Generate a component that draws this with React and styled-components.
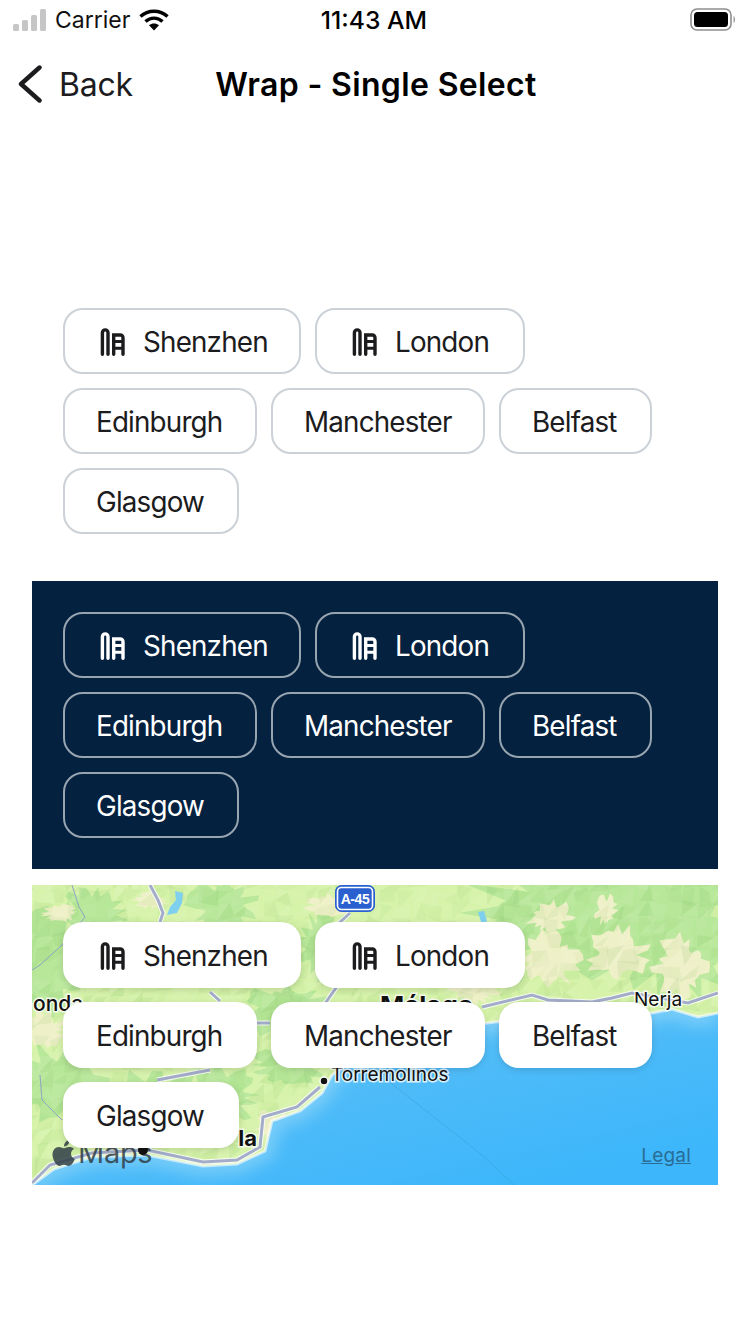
import React from "react";
import styled, { createGlobalStyle } from "styled-components";

const GlobalStyle = createGlobalStyle`
  html, body { margin: 0; padding: 0; background: #fff; }
  body { font-family: Inter, "Liberation Sans", sans-serif; }
`;

const Page = styled.div`
  width: 750px;
  height: 1334px;
  overflow: hidden;
  background: #fff;
  color: #000;
`;

const StatusBar = styled.div`
  height: 40px;
  display: grid;
  grid-template-columns: 1fr auto 1fr;
  align-items: center;
  padding: 0 15px 0 13px;
  box-sizing: border-box;
`;

const StatusLeft = styled.div`
  display: flex;
  align-items: center;
  gap: 9px;
  font-size: 23px;
  color: #111;
`;

const StatusTime = styled.div`
  font-size: 24.7px;
  font-weight: 500;
`;

const StatusRight = styled.div`
  display: flex;
  justify-content: flex-end;
`;

const NavBar = styled.div`
  height: 88px;
  display: grid;
  grid-template-columns: 1fr auto 1fr;
  align-items: center;
  padding: 0 18px;
  box-sizing: border-box;
`;

const BackButton = styled.div`
  display: flex;
  align-items: center;
  gap: 16px;
  font-size: 32px;
  letter-spacing: -0.2px;
  color: #1c1c1e;
`;

const NavTitle = styled.div`
  font-size: 32px;
  font-weight: 600;
  letter-spacing: 0.35px;
  color: #000;
  padding-left: 2px;
`;

const Spacer = styled.div`
  height: 180px;
`;

const Section = styled.div`
  position: relative;
  margin: 0 32px ${(p) => p.$gap || 0}px;
  padding: ${(p) => p.$top ?? 31}px 31px ${(p) => p.$bottom ?? 31}px;
  background: ${(p) => p.$bg || "transparent"};
  height: ${(p) => (p.$height ? p.$height + "px" : "auto")};
  box-sizing: border-box;
  overflow: hidden;
`;

const ChipWrap = styled.div`
  position: relative;
  display: flex;
  flex-wrap: wrap;
  gap: 14px;
`;

const Chip = styled.div`
  width: ${(p) => p.$width}px;
  height: 66px;
  box-sizing: border-box;
  display: flex;
  align-items: center;
  gap: 18px;
  padding: 2px 0 0 ${(p) => (p.$hasIcon ? 35 : 31)}px;
  border-radius: 20px;
  font-size: 27.8px;
  letter-spacing: -0.82px;
  border: 2px solid
    ${(p) => (p.$variant === "dark" ? "#98a5b1" : p.$variant === "light" ? "#cbd1d6" : "transparent")};
  color: ${(p) => (p.$variant === "dark" ? "#fff" : "#1c1c1e")};
  background: ${(p) => (p.$variant === "map" ? "#fff" : "transparent")};
  box-shadow: ${(p) => (p.$variant === "map" ? "0 2px 7px rgba(0, 0, 0, 0.13)" : "none")};
`;

const MapLayer = styled.svg`
  position: absolute;
  left: 0;
  top: 0;
`;

const Legal = styled.span`
  position: absolute;
  right: 27px;
  bottom: 18px;
  font-size: 19px;
  letter-spacing: 0.2px;
  color: #2a6d94;
  text-decoration: underline;
`;

const MapsLogo = styled.div`
  position: absolute;
  left: 20px;
  bottom: 15px;
  display: flex;
  align-items: center;
  gap: 2px;
  font-size: 29px;
  letter-spacing: -0.3px;
  color: rgba(48, 62, 72, 0.85);
`;

const MapDot = styled.span`
  position: absolute;
  left: 106px;
  top: 260px;
  width: 10px;
  height: 10px;
  border-radius: 50%;
  background: #111;
`;

const CITIES = [
  { name: "Shenzhen", width: 238, icon: true },
  { name: "London", width: 210, icon: true },
  { name: "Edinburgh", width: 194 },
  { name: "Manchester", width: 214 },
  { name: "Belfast", width: 153 },
  { name: "Glasgow", width: 176 },
];

function CityIcon({ color }) {
  return (
    <svg width="25" height="28" viewBox="0 0 25 28" fill="none" stroke={color} strokeWidth="3.4" strokeLinecap="round">
      <path d="M2.400 26.200V4.700a2.800 2.800 0 0 1 5.600 0V26.200" />
      <path d="M13.700 26.200V7H20.300a2.700 2.700 0 0 1 2.700 2.700V26.200" />
      <path d="M13.700 13.500H23M13.700 20.300H23" strokeLinecap="butt" strokeWidth="3" />
    </svg>
  );
}

function Chips({ variant }) {
  const iconColor = variant === "dark" ? "#fff" : "#1c1c1e";
  return (
    <ChipWrap>
      {CITIES.map((c) => (
        <Chip key={c.name} $variant={variant} $hasIcon={c.icon} $width={c.width}>
          {c.icon && <CityIcon color={iconColor} />}
          {c.name}
        </Chip>
      ))}
    </ChipWrap>
  );
}

const COAST =
  "M0 300 L22 284 L60 272 L115 270 L171 281 L205 279 L233 266 L240 236 L268 226 L290 208 L300 190 L350 155 L400 145 L463 137 L520 134 L580 132 L620 128 L640 124 L666 132 L686 128";
const LAND = COAST + " L686 0 L0 0 Z";

let seed = 17;
const rnd = () => {
  seed = (seed * 16807) % 2147483647;
  return seed / 2147483647;
};

// jagged patch, the terrain tiles have rough stepped edges
function blob(cx, cy, rx, ry) {
  const pts = [];
  const n = 36;
  for (let i = 0; i < n; i++) {
    const a = (i / n) * Math.PI * 2;
    const r = 0.55 + rnd() * 0.65;
    pts.push((cx + Math.cos(a) * rx * r).toFixed(1) + "," + (cy + Math.sin(a) * ry * r).toFixed(1));
  }
  return pts.join(" ");
}

// low poly facets so the terrain has the faceted look of the map tiles
function makeFacets() {
  const out = [];
  const step = 15;
  for (let x = -step; x < 700; x += step) {
    for (let y = -step; y < 290; y += step) {
      const a = [x + rnd() * 8, y + rnd() * 8];
      const b = [x + step + rnd() * 8, y + rnd() * 8];
      const c = [x + rnd() * 8, y + step + rnd() * 8];
      const d = [x + step + rnd() * 8, y + step + rnd() * 8];
      const tone = () => (rnd() > 0.5 ? "rgba(255,255,255," : "rgba(80,160,60,") + (0.02 + rnd() * 0.07).toFixed(3) + ")";
      out.push({ p: [a, b, c].join(" "), f: tone() });
      out.push({ p: [b, d, c].join(" "), f: tone() });
    }
  }
  return out;
}

const GREENS = [
  blob(560, 28, 150, 60),
  blob(640, 55, 80, 60),
  blob(455, 70, 38, 34),
  blob(15, 75, 38, 58),
  blob(25, 200, 52, 40),
  blob(120, 215, 58, 28),
  blob(190, 210, 40, 26),
  blob(255, 125, 46, 26),
  blob(260, 180, 36, 18),
  blob(60, 30, 32, 26),
  blob(190, 20, 34, 24),
  blob(290, 60, 24, 34),
];
const CREAMS = [
  blob(518, 32, 22, 17),
  blob(516, 75, 30, 28),
  blob(586, 70, 30, 27),
  blob(648, 82, 28, 30),
  blob(574, 25, 11, 16),
  blob(28, 28, 17, 8),
  blob(12, 145, 20, 17),
  blob(75, 155, 22, 10),
  blob(240, 240, 17, 14),
  blob(120, 15, 17, 8),
  blob(300, 20, 24, 11),
  blob(440, 105, 26, 14),
];
const FACETS = makeFacets();

const ROADS = [
  "M0 298 L18 280 L60 268 L115 265 L171 277 L205 275 L228 262 L231 232 L265 222 L288 202",
  "M118 0 L126 15 L131 28 L128 37",
  "M318 28 L305 40 L300 70 L306 100 L292 120",
  "M178 107 L188 116",
  "M225 138 L238 138",
  "M125 195 L178 185",
  "M450 122 L500 110 L516 115 L560 117 L580 113 L600 108 L656 118 L686 108",
];

function MapBackground() {
  return (
    <MapLayer width="686" height="300" viewBox="0 0 686 300">
      <defs>
        <linearGradient id="sea" x1="0.35" y1="0.25" x2="0.75" y2="1">
          <stop offset="0" stopColor="#6cc7f6" />
          <stop offset="0.55" stopColor="#4dbbf8" />
          <stop offset="1" stopColor="#3db6fb" />
        </linearGradient>
        <clipPath id="land">
          <path d={LAND} />
        </clipPath>
        <filter id="glow" x="-10%" y="-10%" width="120%" height="120%">
          <feGaussianBlur stdDeviation="8" />
        </filter>
      </defs>
      <rect width="686" height="300" fill="url(#sea)" />
      <path d={COAST} fill="none" stroke="#a6e0fa" strokeWidth="18" opacity="0.55" filter="url(#glow)" />
      <path d="M355 195 L450 270 L482 300" stroke="#36a0d8" strokeWidth="1" fill="none" opacity="0.55" />
      <path d={LAND} fill="#d6f3a9" />
      <g clipPath="url(#land)">
        {GREENS.map((p, i) => (
          <polygon key={i} points={p} fill="#b7e798" />
        ))}
        {CREAMS.map((p, i) => (
          <polygon key={i} points={p} fill="#eef0c6" />
        ))}
        {FACETS.map((t, i) => (
          <polygon key={i} points={t.p} fill={t.f} />
        ))}
      </g>
      <path d={COAST} fill="none" stroke="#fff" strokeWidth="3" opacity="0.6" />
      <g fill="none" stroke="#fff" strokeWidth="5" opacity="0.85">
        {ROADS.map((d, i) => (
          <path key={i} d={d} />
        ))}
      </g>
      <g fill="none" stroke="#a3adc9" strokeWidth="3">
        {ROADS.map((d, i) => (
          <path key={i} d={d} />
        ))}
      </g>
      <g fill="none" stroke="#8ea4c4" strokeWidth="1">
        <path d="M40 0 L47 22 L53 32 L30 60 L8 80 L0 85" />
        <path d="M8 190 L10 215 L30 235" />
      </g>
      <path d="M135 30 L138 22 L144 15 L143 6 L151 8 L150 18 L145 28 Z" fill="#7fd0ee" />
      <path d="M446 27 L452 26 L455 36 L450 40 Z" fill="#7fd0ee" />
      <g fontFamily="Inter, 'Liberation Sans', sans-serif" stroke="rgba(255,255,255,0.8)" strokeWidth="3" paintOrder="stroke" fill="#111">
        <text x="1" y="126" fontSize="21" fontWeight="500">onda</text>
        <text x="348" y="130" fontSize="26" fontWeight="700">Málaga</text>
        <text x="602" y="121" fontSize="19">Nerja</text>
        <text x="299" y="196" fontSize="19">Torremolinos</text>
        <text x="225" y="261" fontSize="22" fontWeight="700" textAnchor="end">la</text>
      </g>
      <circle cx="292" cy="196" r="4" fill="#111" stroke="#fff" strokeWidth="1.5" />
      <g>
        <rect x="303.500" y="0.500" width="39" height="26" rx="6" fill="#2a5fd0" stroke="#2a5fd0" />
        <rect x="305.500" y="2.500" width="35" height="22" rx="4" fill="#2a5fd0" stroke="#fff" strokeWidth="1.6" />
        <text x="323" y="19" fontSize="14" fontWeight="700" letterSpacing="-0.4" fill="#fff" textAnchor="middle" fontFamily="'Liberation Sans', sans-serif">A-45</text>
      </g>
    </MapLayer>
  );
}

export default function App() {
  return (
    <Page>
      <GlobalStyle />
      <StatusBar>
        <StatusLeft>
          <svg width="33" height="22" viewBox="0 0 33 22" fill="#c6c6c6">
            <rect x="0" y="15" width="6" height="7" rx="1.5" />
            <rect x="9" y="11" width="6" height="11" rx="1.5" />
            <rect x="18" y="6" width="6" height="16" rx="1.5" />
            <rect x="27" y="0" width="6" height="22" rx="1.5" />
          </svg>
          <span>Carrier</span>
          <svg width="30" height="22" viewBox="0 0 30 22" fill="none" stroke="#000" strokeWidth="3.4">
            <path d="M1.500 7.500C9 .5 21 .5 28.500 7.500" />
            <path d="M6.500 12.500c5-4.500 12-4.500 17 0" />
            <path d="M15 21.500l-5-5.200c3-2.400 7-2.400 10 0z" fill="#000" stroke="none" />
          </svg>
        </StatusLeft>
        <StatusTime>11:43 AM</StatusTime>
        <StatusRight>
          <svg width="45" height="24" viewBox="0 0 45 24" fill="none">
            <rect x="1" y="1" width="40" height="21" rx="6" stroke="#8e8e8e" strokeWidth="1.6" />
            <rect x="4" y="4" width="34" height="15" rx="3.5" fill="#000" />
            <path d="M43.500 8v7c1-.4 1.500-2 1.500-3.500S44.500 8.400 43.500 8z" fill="#9a9a9a" />
          </svg>
        </StatusRight>
      </StatusBar>
      <NavBar>
        <BackButton>
          <svg width="25" height="38" viewBox="0 0 25 38" fill="none" stroke="#1c1c1e" strokeWidth="4.400" strokeLinecap="round" strokeLinejoin="round">
            <path d="M21.500 2.500L3 19l18.500 16.500" />
          </svg>
          <span>Back</span>
        </BackButton>
        <NavTitle>Wrap - Single Select</NavTitle>
        <div />
      </NavBar>
      <Spacer />
      <Section $top={0} $bottom={47}>
        <Chips variant="light" />
      </Section>
      <Section $bg="#04213f" $gap={16}>
        <Chips variant="dark" />
      </Section>
      <Section $height={300} $top={37}>
        <MapBackground />
        <MapsLogo>
          <svg width="24" height="28" viewBox="0 0 24 28" fill="currentColor">
            <path d="M17 8c-2 0-3.300 1.200-5 1.200S8.800 8 6.800 8C3.500 8 .5 11 .5 15.500.5 21 4.500 27 7.500 27c1.700 0 2.500-1.200 4.500-1.200s2.800 1.200 4.500 1.200c3 0 5.500-4.500 6.300-7-2.500-1-3.800-3-3.800-5.300 0-2.300 1.300-4 3-5C21 8.700 19 8 17 8z" />
            <path d="M12 7.500C12 4 14.500 1.200 17.500 1c.2 3.500-2.500 6.500-5.500 6.500z" />
          </svg>
          <span>Maps</span>
        </MapsLogo>
        <MapDot />
        <Legal>Legal</Legal>
        <Chips variant="map" />
      </Section>
    </Page>
  );
}
